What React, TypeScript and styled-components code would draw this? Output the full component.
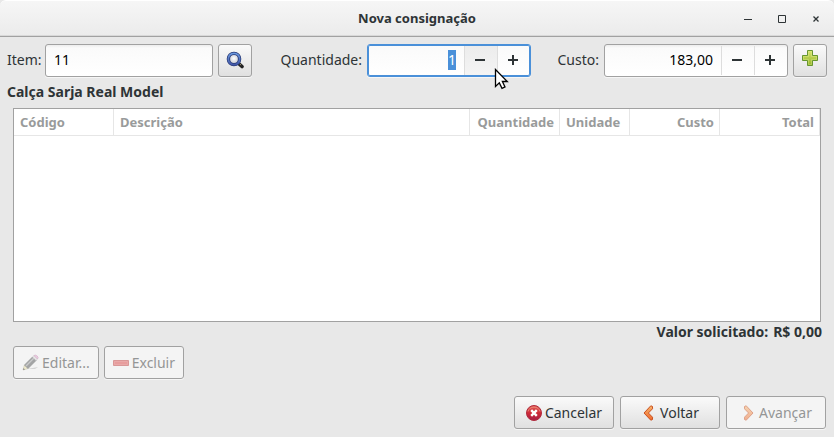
import React, { useEffect, useRef } from "react";
import styled, { createGlobalStyle, css } from "styled-components";

const GlobalStyle = createGlobalStyle`
  * { box-sizing: border-box; }
  body {
    margin: 0;
    background: #e8e8e8;
    color: #2e3436;
    font-family: "Noto Sans", "Open Sans", sans-serif;
    font-size: 14px;
    line-height: 20px;
  }
  button, input { font: inherit; color: inherit; margin: 0; }
`;

const Window = styled.div`
  display: flex;
  flex-direction: column;
  min-height: 100vh;
`;

const TitleBar = styled.header`
  display: grid;
  grid-template-columns: 1fr auto 1fr;
  align-items: center;
  height: 37px;
  border-top: 1px solid #ffffff;
  border-bottom: 1px solid #a1a1a1;
  box-shadow: inset 0 -1px #d8d8d8;
  background: linear-gradient(#f6f6f6, #ebebeb);
  border-radius: 6px 6px 0 0;
`;

const Title = styled.h1`
  grid-column: 2;
  margin: 0;
  padding-bottom: 2px;
  font-size: 13px;
  line-height: 20px;
  font-weight: 700;
`;

const WindowControls = styled.div`
  display: flex;
  justify-content: flex-end;
  gap: 10px;
  padding-right: 6px;
`;

const ControlButton = styled.button`
  display: flex;
  align-items: center;
  justify-content: center;
  width: 24px;
  height: 24px;
  padding: 0;
  border: 0;
  background: none;
`;

const Form = styled.form`
  display: flex;
  gap: 26px;
  padding: 7px 7px 0;
`;

const Field = styled.div<{ $grow?: boolean }>`
  display: flex;
  align-items: center;
  gap: 5px;
  ${(p) => p.$grow && css`flex: 1;`}
`;

const Label = styled.label<{ $width: number }>`
  width: ${(p) => p.$width}px;
  flex: none;
  padding-bottom: 2px;
  text-align: right;
  white-space: nowrap;
`;

const raised = css`
  border: 1px solid #a1a1a1;
  border-radius: 3px;
  box-shadow: 0 1px #f6f6f6;
`;

const TextInput = styled.input`
  ${raised}
  flex: 1;
  min-width: 0;
  width: 100%;
  height: 33px;
  padding: 0 8px 2px;
  color: #000000;
  background: linear-gradient(#ededed, #fafafa 3px, #ffffff);
  outline: none;
`;

const Spin = styled.div<{ $width: number; $active?: boolean }>`
  ${raised}
  position: relative;
  display: flex;
  width: ${(p) => p.$width}px;
  height: 33px;
  background: linear-gradient(#ededed, #fafafa 3px, #ffffff);
  ${(p) =>
    p.$active &&
    css`
      border-color: #4a90d9;
      box-shadow: inset 0 0 0 1px #4a90d9, 0 1px #f6f6f6;
      background: linear-gradient(#fafafa, #ffffff);
    `}
`;

const SpinInput = styled.input`
  flex: 1;
  min-width: 0;
  height: 20px;
  margin-top: 5px;
  padding: 0 8px;
  border: 0;
  outline: none;
  background: none;
  color: #000000;
  text-align: right;
  caret-color: transparent;
  &::selection {
    background: #4a90d9;
    color: #ffffff;
  }
`;

const StepButton = styled.button<{ $hover?: boolean }>`
  display: flex;
  align-items: center;
  justify-content: center;
  width: 33px;
  margin: 1px 0;
  padding: 0 2px 2px 0;
  border: 0;
  border-left: 1px solid #dddddd;
  background: ${(p) => (p.$hover ? "linear-gradient(#ececec, #f4f4f4)" : "none")};
`;

const Pointer = styled.svg`
  position: absolute;
  left: 126px;
  top: 23px;
  pointer-events: none;
`;

const Button = styled.button<{ $size?: "icon" | "wide" }>`
  ${raised}
  display: flex;
  align-items: center;
  justify-content: center;
  gap: 3px;
  height: 33px;
  flex: none;
  padding: 0 8px;
  white-space: nowrap;
  background: linear-gradient(#fafafa, #e0e0e0);
  ${(p) => p.$size === "icon" && css`width: 34px; padding: 0 0 2px;`}
  ${(p) => p.$size === "wide" && css`width: 100px;`}
  &:disabled {
    color: #949696;
    background: #f4f4f4;
  }
  &:disabled svg { opacity: 0.5; }
`;

const ItemName = styled.p`
  margin: 5px 7px 6px;
  font-weight: 700;
`;

const ListFrame = styled.div`
  min-height: 214px;
  margin: 0 13px;
  border: 1px solid #a1a1a1;
  background: #ffffff;
`;

const Table = styled.table`
  width: 100%;
  table-layout: fixed;
  border-collapse: separate;
  border-spacing: 0;
`;

const HeadCell = styled.th<{ $width?: number; $right?: boolean }>`
  width: ${(p) => (p.$width ? `${p.$width}px` : "auto")};
  height: 27px;
  padding: 0 5px 0 6px;
  border-right: 1px solid #e6e6e6;
  border-bottom: 1px solid #e6e6e6;
  color: #999b9b;
  font-size: 13px;
  font-weight: 700;
  white-space: nowrap;
  text-align: ${(p) => (p.$right ? "right" : "left")};
`;

const Summary = styled.div`
  display: flex;
  justify-content: flex-end;
  gap: 5px;
  padding: 0 12px;
  font-weight: 700;
`;

const Actions = styled.div`
  display: flex;
  gap: 5px;
  padding: 4px 13px 0;
`;

const Footer = styled.footer`
  display: flex;
  justify-content: flex-end;
  gap: 6px;
  padding: 17px 8px 8px;
`;

const Minus = () => (
  <svg width="10" height="10" viewBox="0 0 10 10" aria-hidden="true">
    <path d="M0 4h10v2H0z" fill="#2e3436" />
  </svg>
);

const Plus = () => (
  <svg width="10" height="10" viewBox="0 0 10 10" aria-hidden="true">
    <path d="M4 0h2v4h4v2H6v4H4V6H0V4h4z" fill="#2e3436" />
  </svg>
);

const SearchIcon = () => (
  <svg width="18" height="18" viewBox="0 0 18 18" aria-hidden="true">
    <defs>
      <radialGradient id="lens" cx=".5" cy=".45" r=".5">
        <stop offset="0" stopColor="#ffffff" />
        <stop offset="1" stopColor="#c3c5cf" />
      </radialGradient>
      <linearGradient id="rim" x2="0" y2="1">
        <stop offset="0" stopColor="#6c9ae0" />
        <stop offset="1" stopColor="#4257a8" />
      </linearGradient>
    </defs>
    <path d="M12 12l4 3.5" stroke="#222222" strokeWidth="3.6" strokeLinecap="round" />
    <path d="M13.5 12.8l1.6 1.3" stroke="#a09a80" strokeWidth="1" />
    <circle cx="8" cy="8" r="5.6" fill="url(#lens)" stroke="#263875" strokeWidth="3.4" />
    <circle cx="8" cy="8" r="5.7" fill="none" stroke="url(#rim)" strokeWidth="1.8" />
  </svg>
);

const AddIcon = () => (
  <svg width="16" height="19" viewBox="0 0 16 19" aria-hidden="true">
    <defs>
      <linearGradient id="add" x2="0" y2="1">
        <stop offset="0" stopColor="#d6e56c" />
        <stop offset="1" stopColor="#94b52a" />
      </linearGradient>
    </defs>
    <path d="M5.5.5h5v5h5v5h-5v5h-5v-5h-5v-5h5z" fill="url(#add)" stroke="#669630" />
    <path d="M6.5 1.5h3v5h5v3h-5v5h-3v-5h-5v-3h5z" fill="none" stroke="#e4ef9b" opacity=".35" />
  </svg>
);

const EditIcon = () => (
  <svg width="17" height="17" viewBox="0 0 17 17" aria-hidden="true">
    <path d="M5 15l11-2-3 2z" fill="#b5b5b5" />
    <path d="M1 16l1.5-5L6 14.5z" fill="#ede4a5" stroke="#aaa37b" strokeWidth=".7" />
    <path d="M1 16l.6-2 1.4 1.4z" fill="#222222" />
    <path d="M2.5 11L10.5 3 14 6.5 6 14.5z" fill="#555759" stroke="#343638" strokeWidth=".7" />
    <path d="M4 12L12 4" stroke="#a0a2a2" strokeWidth="1.2" />
    <path d="M10.5 3l1.5-1.5 3.5 3.5L14 6.5z" fill="#dedede" stroke="#888888" strokeWidth=".5" />
    <path d="M12 1.5q1.5-1 3.2.5T15.5 5z" fill="#e8a4d0" stroke="#b576a0" strokeWidth=".7" />
  </svg>
);

const RemoveIcon = () => (
  <svg width="16" height="16" viewBox="0 0 16 16" aria-hidden="true">
    <path d="M.5 5.5h15v5H.5z" fill="#dc4848" stroke="#bf3d3d" />
    <path d="M1.5 6.5h13v3h-13z" fill="none" stroke="#e06060" />
  </svg>
);

const CancelIcon = () => (
  <svg width="16" height="16" viewBox="0 0 16 16" aria-hidden="true">
    <defs>
      <linearGradient id="stop" x2="0" y2="1">
        <stop offset="0" stopColor="#e26158" />
        <stop offset=".5" stopColor="#cf2b38" />
        <stop offset="1" stopColor="#a51c45" />
      </linearGradient>
    </defs>
    <circle cx="8" cy="8" r="7.5" fill="url(#stop)" stroke="#b02a3c" />
    <path d="M2 6.5a6.3 6.3 0 0 1 12 0" fill="none" stroke="#f09b85" opacity=".7" />
    <path d="M5.2 5.2l5.6 5.6M10.8 5.2l-5.6 5.6" stroke="#ffffff" strokeWidth="2.4" />
  </svg>
);

const Arrow = ({ forward }: { forward?: boolean }) => (
  <svg width="16" height="16" viewBox="0 0 16 16" aria-hidden="true">
    <defs>
      <linearGradient id={forward ? "next" : "back"} x2="0" y2="1">
        <stop offset="0" stopColor="#f7b46c" />
        <stop offset="1" stopColor="#ef6a2d" />
      </linearGradient>
    </defs>
    <path
      d={forward
        ? "M4.5 1.5L6.2.8 13 8l-6.800 7.200-1.700-.7v-2.300L8.600 8 4.500 3.800z"
        : "M11.500 1.500L9.800.8 3 8l6.800 7.200 1.700-.7v-2.300L7.400 8l4.100-4.200z"}
      fill={`url(#${forward ? "next" : "back"})`}
      stroke="#c9501f"
      strokeLinejoin="round"
    />
  </svg>
);

const columns = [
  { name: "Código", width: 100 },
  { name: "Descrição" },
  { name: "Quantidade", width: 90, right: true },
  { name: "Unidade", width: 70 },
  { name: "Custo", width: 90, right: true },
  { name: "Total", width: 100, right: true },
];

export default function App() {
  const quantity = useRef<HTMLInputElement>(null);

  useEffect(() => {
    quantity.current?.focus();
    quantity.current?.select();
  }, []);

  return (
    <>
      <GlobalStyle />
      <Window>
        <TitleBar>
          <Title>Nova consignação</Title>
          <WindowControls>
            <ControlButton type="button" aria-label="Minimizar">
              <svg width="8" height="8"><path d="M0 4h8v1H0z" fill="#2e3436" /></svg>
            </ControlButton>
            <ControlButton type="button" aria-label="Maximizar">
              <svg width="8" height="8"><path d="M.5.5h7v7h-7z" fill="none" stroke="#2e3436" /></svg>
            </ControlButton>
            <ControlButton type="button" aria-label="Fechar">
              <svg width="6" height="6"><path d="M.5.5l5 5M5.5.5l-5 5" stroke="#2e3436" strokeWidth="1.3" /></svg>
            </ControlButton>
          </WindowControls>
        </TitleBar>

        <Form onSubmit={(e) => e.preventDefault()}>
          <Field $grow>
            <Label $width={33} htmlFor="item">Item:</Label>
            <TextInput id="item" defaultValue="11" />
            <Button type="button" $size="icon" aria-label="Procurar"><SearchIcon /></Button>
          </Field>
          <Field>
            <Label $width={84} htmlFor="quantidade">Quantidade:</Label>
            <Spin $width={164} $active>
              <SpinInput ref={quantity} id="quantidade" defaultValue="1" />
              <StepButton type="button" $hover aria-label="Diminuir quantidade"><Minus /></StepButton>
              <StepButton type="button" aria-label="Aumentar quantidade"><Plus /></StepButton>
              <Pointer width="15" height="22" viewBox="0 0 15 22" aria-hidden="true">
                <path
                  d="M1.5 1.5v17l3.8-3.6 2.7 5.4 3-1.4-2.6-5.4h4.9z"
                  fill="#ffffff"
                  stroke="#000000"
                  strokeWidth="1.3"
                />
              </Pointer>
            </Spin>
          </Field>
          <Field>
            <Label $width={42} htmlFor="custo">Custo:</Label>
            <Spin $width={184}>
              <SpinInput id="custo" defaultValue="183,00" />
              <StepButton type="button" aria-label="Diminuir custo"><Minus /></StepButton>
              <StepButton type="button" aria-label="Aumentar custo"><Plus /></StepButton>
            </Spin>
            <Button type="submit" $size="icon" aria-label="Adicionar"><AddIcon /></Button>
          </Field>
        </Form>

        <ItemName>Calça Sarja Real Model</ItemName>

        <ListFrame>
          <Table>
            <thead>
              <tr>
                {columns.map((c) => (
                  <HeadCell key={c.name} scope="col" $width={c.width} $right={c.right}>{c.name}</HeadCell>
                ))}
              </tr>
            </thead>
            <tbody />
          </Table>
        </ListFrame>

        <Summary>
          <span>Valor solicitado:</span>
          <span>R$ 0,00</span>
        </Summary>

        <Actions>
          <Button type="button" disabled><EditIcon />Editar...</Button>
          <Button type="button" disabled><RemoveIcon />Excluir</Button>
        </Actions>

        <Footer>
          <Button type="button" $size="wide"><CancelIcon />Cancelar</Button>
          <Button type="button" $size="wide"><Arrow />Voltar</Button>
          <Button type="button" $size="wide" disabled><Arrow forward />Avançar</Button>
        </Footer>
      </Window>
    </>
  );
}
